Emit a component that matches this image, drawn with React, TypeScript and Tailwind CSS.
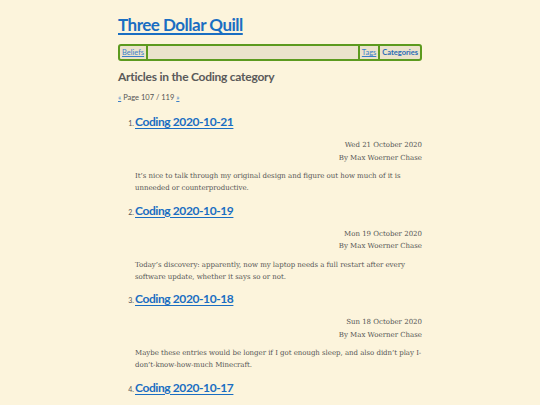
import React from 'react';

type Post = { n: number; title: string; date?: string; body?: string };

const posts: Post[] = [
  {
    n: 1,
    title: 'Coding 2020-10-21',
    date: 'Wed 21 October 2020',
    body: "It\u2019s nice to talk through my original design and figure out how much of it is unneeded or counterproductive.",
  },
  {
    n: 2,
    title: 'Coding 2020-10-19',
    date: 'Mon 19 October 2020',
    body: "Today\u2019s discovery: apparently, now my laptop needs a full restart after every software update, whether it says so or not.",
  },
  {
    n: 3,
    title: 'Coding 2020-10-18',
    date: 'Sun 18 October 2020',
    body: "Maybe these entries would be longer if I got enough sleep, and also didn\u2019t play I-\u200Bdon\u2019t-know-how-much Minecraft.",
  },
  { n: 4, title: 'Coding 2020-10-17' },
];

const sans = "font-['Lato','Noto_Sans',sans-serif]";
const serif = "font-['DejaVu_Serif','Liberation_Serif',serif]";

export default function App() {
  return (
    <div className="h-[405px] w-full overflow-hidden bg-[#fcf4dc] text-[#555]">
      <div className="mx-auto w-[304px] pt-[14px]">
        <h1 className={`${sans} text-[17px] font-bold leading-[22px] tracking-[-0.5px]`}>
          <a href="#" className="text-[#1a6ec2] underline decoration-[1.5px] underline-offset-[2px]">
            Three Dollar Quill
          </a>
        </h1>

        <nav className={`${sans} mt-[8px] flex h-[17px] items-stretch rounded-[3px] border-2 border-[#5c9a1f] bg-[#ebe3cc] text-[7.5px] leading-[13px]`}>
          <a href="#" className="border-r-2 border-[#5c9a1f] px-[2px] text-[#3b7fc9] underline">
            Beliefs
          </a>
          <div className="flex-1" />
          <a href="#" className="border-l-2 border-[#5c9a1f] px-[2px] text-[#3b7fc9] underline">
            Tags
          </a>
          <span className="border-l-2 border-[#5c9a1f] px-[2px] font-bold text-[#2a6bb5]">Categories</span>
        </nav>

        <h2 className={`${sans} mt-[7px] text-[12px] font-bold leading-[18px] tracking-[-0.25px] text-[#5a5a5a]`}>
          Articles in the Coding category
        </h2>

        <p className={`${sans} mt-[7px] text-[7.5px] leading-[10px] text-[#555]`}>
          <a href="#" className="text-[#3b7fc9] underline">«</a> Page 107 / 119{' '}
          <a href="#" className="text-[#3b7fc9] underline">»</a>
        </p>

        <ol className="mt-[10px] pl-[9px]">
          {posts.map((p) => (
            <li key={p.n} className="h-[88.5px]">
              <div className="flex items-baseline">
                <span className={`${sans} w-[8px] shrink-0 pr-[1px] text-right text-[7px]`}>{p.n}.</span>
                <a
                  href="#"
                  className={`${sans} text-[12px] font-bold leading-[18px] tracking-[-0.4px] text-[#1a6ec2] underline decoration-[1px] underline-offset-[2px]`}
                >
                  {p.title}
                </a>
              </div>
              {p.date && (
                <div className={`${serif} ml-[8px] mt-[8px] text-right text-[7px] leading-[12.5px] text-[#555]`}>
                  <div>{p.date}</div>
                  <div>By Max Woerner Chase</div>
                </div>
              )}
              {p.body && (
                <p className={`${serif} ml-[8px] mt-[6px] text-[7px] leading-[12px] tracking-[-0.03px] text-[#555]`}>{p.body}</p>
              )}
            </li>
          ))}
        </ol>
      </div>
    </div>
  );
}
